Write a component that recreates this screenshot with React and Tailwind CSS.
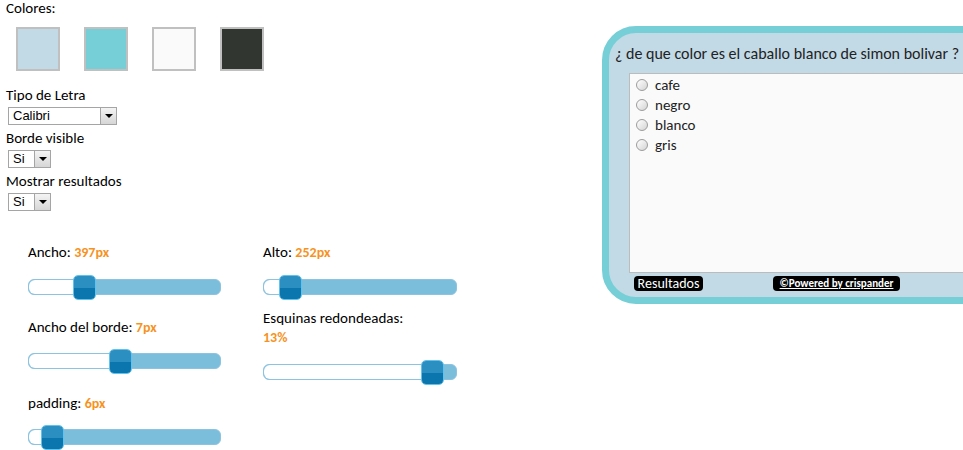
import React from 'react';

const font = { fontFamily: 'Carlito, Lato, "Open Sans", sans-serif' };
const selFont = { fontFamily: '"Liberation Sans", Arial, sans-serif' };

const Swatch = ({ color }) => (
  <div className={`w-[44px] h-[44px] border-2 border-[#c0c0c0] ${color}`} />
);

const FakeSelect = ({ value, width }) => (
  <div className={`flex items-center h-[18px] border border-[#a5a5a5] bg-white ml-[2px] ${width}`}>
    <span className="flex-1 pl-[4px] text-[13px] leading-[16px] text-black" style={selFont}>{value}</span>
    <span className="w-[16px] h-[16px] border-l border-[#a5a5a5] bg-gradient-to-b from-[#f4f4f4] to-[#d6d6d6] flex items-center justify-center">
      <span className="block w-0 h-0 border-l-[4px] border-r-[4px] border-t-[4px] border-l-transparent border-r-transparent border-t-black" />
    </span>
  </div>
);

const Slider = ({ left }) => (
  <div className="relative h-[16px] rounded-[6px] border border-[#8cc3e0] bg-[#7bbedb]">
    <div className="absolute left-0 top-0 bottom-0 rounded-l-[6px] bg-white" style={{ width: left + 11 }} />
    <div
      className="absolute top-[-5px] w-[23px] h-[25px] rounded-[5px] border border-[#5fc3ee] overflow-hidden flex flex-col"
      style={{ left }}
    >
      <div className="flex-1 bg-[#2c8fc2]" />
      <div className="flex-1 bg-[#0b75ad]" />
    </div>
  </div>
);

const Label = ({ text, value }) => (
  <div className="h-[20px] text-[15px] leading-[20px] text-black whitespace-nowrap">
    {text} <span className="text-[#f6931f] font-bold text-[14px] leading-none">{value}</span>
  </div>
);

const Radio = ({ label }) => (
  <div className="flex items-center h-[20px] gap-[7px]">
    <span className="w-[12px] h-[12px] rounded-full border border-[#9c9c9c] bg-gradient-to-br from-white to-[#d4d4d4]" />
    <span className="text-[15px] text-[#222]">{label}</span>
  </div>
);

export default function App() {
  return (
    <div className="w-[963px] h-[450px] overflow-hidden bg-white flex" style={font}>
      <div className="w-[602px] shrink-0 pl-[6px]">
        <div className="text-[15px] leading-[17px] text-black">Colores:</div>
        <div className="flex gap-[24px] pl-[10px] mt-[10px]">
          <Swatch color="bg-[#c2d9e6]" />
          <Swatch color="bg-[#76cfd6]" />
          <Swatch color="bg-[#fafafa]" />
          <Swatch color="bg-[#323630]" />
        </div>

        <div className="mt-[15px] flex flex-col">
          <div className="text-[15px] leading-[18px] text-black mb-[3px]">Tipo de Letra</div>
          <FakeSelect value="Calibri" width="w-[109px]" />
          <div className="text-[15px] leading-[18px] text-black mt-[4px] mb-[3px]">Borde visible</div>
          <FakeSelect value="Si" width="w-[43px]" />
          <div className="text-[15px] leading-[18px] text-black mt-[4px] mb-[3px]">Mostrar resultados</div>
          <FakeSelect value="Si" width="w-[43px]" />
        </div>

        <div className="flex gap-[42px] pl-[22px] mt-[31px]">
          <div className="w-[193px] flex flex-col">
            <Label text="Ancho:" value="397px" />
            <div className="mt-[17px]"><Slider left={44} /></div>
            <div className="mt-[22px]"><Label text="Ancho del borde:" value="7px" /></div>
            <div className="mt-[16px]"><Slider left={80} /></div>
            <div className="mt-[24px]"><Label text="padding:" value="6px" /></div>
            <div className="mt-[16px]"><Slider left={12} /></div>
          </div>
          <div className="w-[194px] flex flex-col">
            <Label text="Alto:" value="252px" />
            <div className="mt-[17px]"><Slider left={15} /></div>
            <div className="mt-[13px] text-[15px] leading-[20px] text-black">Esquinas redondeadas:</div>
            <div className="text-[14px] leading-[20px] text-[#f6931f] font-bold">13%</div>
            <div className="mt-[16px]"><Slider left={157} /></div>
          </div>
        </div>
      </div>

      <div className="mt-[26px] w-[423px] h-[278px] shrink-0 border-[7px] border-[#76cfd6] bg-[#c2d9e6] rounded-[34px] p-[6px] flex flex-col">
        <div className="mt-[5px] text-[16px] leading-[20px] text-[#222] whitespace-nowrap">
          ¿ de que color es el caballo blanco de simon bolivar ?
        </div>
        <div className="mt-[9px] ml-[14px] h-[201px] border border-[#bcbcbc] bg-[#fafafa] pt-[1px] pl-[6px]">
          <Radio label="cafe" />
          <Radio label="negro" />
          <Radio label="blanco" />
          <Radio label="gris" />
        </div>
        <div className="mt-[3px] h-[15px] flex items-center pl-[19px]">
          <span className="bg-black text-white text-[14px] leading-[15px] rounded-[4px] px-[3px] w-[69px] text-center">Resultados</span>
          <span className="ml-[70px] bg-black text-white text-[11px] leading-[15px] font-bold underline rounded-[4px] px-[5px] w-[127px] text-center">
            ©Powered by crispander
          </span>
        </div>
      </div>
    </div>
  );
}
